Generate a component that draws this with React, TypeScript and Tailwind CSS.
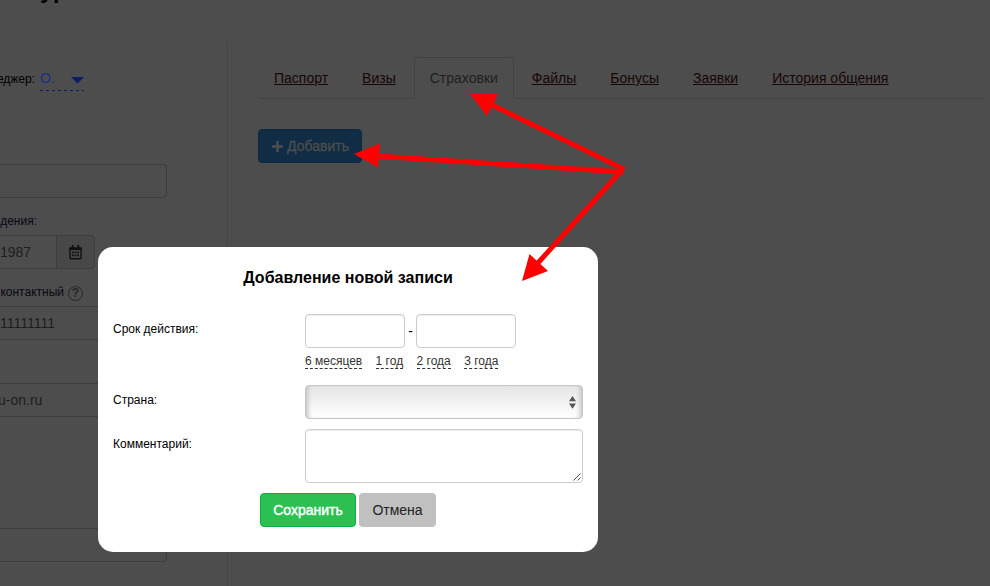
import { FaPlus } from 'react-icons/fa';

const TABS = ['Паспорт', 'Визы', 'Страховки', 'Файлы', 'Бонусы', 'Заявки', 'История общения'];
const PERIODS = ['6 месяцев', '1 год', '2 года', '3 года'];

// tip and tail of each pointer
const ARROWS = [
  { line: 'M624.5 169.5L490 104', head: '470,94 498,94 487,116' },
  { line: 'M623 172L376 156', head: '354,154 380,143.5 378,167.5' },
  { line: 'M622 170L537 264', head: '522,281 529.5,254 548,271' },
];

export default function App() {
  return (
    <div className="relative flex h-[586px] w-[990px] overflow-hidden bg-[#4d4d4d] font-['Liberation_Sans',Arial,sans-serif] text-black">
      <ClientForm />
      <ClientTabs />
      <div className="absolute left-[98px] top-[247px]">
        <AddDialog />
      </div>
      <Arrows />
    </div>
  );
}

function ClientForm() {
  return (
    <div className="flex w-[228px] shrink-0 flex-col">
      <div className="h-[41px] shrink-0">
        <h1 className="-mt-[24px] pl-[40px] text-2xl leading-[28px] font-bold">ур</h1>
      </div>
      <div className="flex grow flex-col border-r border-[#454545]">
        <div className="mt-[27px] flex h-[22px] items-start">
          <span className="flex w-[35px] justify-end text-[12px] leading-[22px] whitespace-nowrap">еджер:</span>
          <a className="ml-[5px] flex h-[22px] w-[44px] items-start justify-between text-[14px] leading-[20px] text-[#1a2f85]">
            <span>О.</span>
            <svg className="mt-[9px]" width="13" height="7" viewBox="0 0 13 7">
              <path d="M0 0H13L6.5 6.5Z" fill="#0d1b6b" />
            </svg>
          </a>
        </div>
        <svg className="ml-[40px] shrink-0" width="44" height="1">
          <path d="M0 .5H44" stroke="#0d1b6b" strokeDasharray="3 3" />
        </svg>
        <Field className="mt-[73px] w-[167px] rounded-r-[4px] border-r" />
        <Label className="mt-[15px] w-[37px]">ждения:</Label>
        <div className="mt-[6px] flex">
          <Field className="w-[56px]">1987</Field>
          <div className="flex h-[34px] w-[39px] items-center justify-center rounded-r-[4px] border border-[#3d3d3d] bg-[#484848]">
            <CalendarIcon />
          </div>
        </div>
        <div className="mt-[15px] flex h-[16px] items-center">
          <Label className="w-[64px]">контактный</Label>
          <HelpIcon />
        </div>
        <Field className="mt-[6px] w-[167px]">11111111</Field>
        <Field className="mt-[43px] w-[167px]">
          <span className="-ml-[2px]">u-on.ru</span>
        </Field>
        <Field className="mt-[111px] w-[167px] rounded-r-[4px] border-r" />
      </div>
    </div>
  );
}

function Label({ className, children }: { className: string; children: string }) {
  return (
    <span className={`flex h-[16px] shrink-0 items-center justify-end text-[12px] whitespace-nowrap text-[#080812] ${className}`}>
      {children}
    </span>
  );
}

function Field({ className, children }: { className: string; children?: React.ReactNode }) {
  return (
    <div className={`flex h-[34px] shrink-0 items-center border-y border-[#3d3d3d] text-[14px] text-[#1d1d1d] ${className}`}>
      {children}
    </div>
  );
}

function CalendarIcon() {
  return (
    <svg width="13" height="15" viewBox="0 0 13 15" fill="none">
      <path d="M1 4V12.7Q1 13.7 2 13.7H11Q12 13.7 12 12.7V4Z" stroke="#101010" strokeWidth="1.4" />
      <path d="M.4 2.2H12.6V5H.4ZM2.8 0H4.6V3H2.8ZM8.4 0H10.2V3H8.4Z" fill="#101010" />
      <path d="M3 7.3H10M3 10.3H10" stroke="#101010" strokeWidth="1.7" strokeDasharray="1.8 .8" />
    </svg>
  );
}

function HelpIcon() {
  return (
    <span className="mt-[2px] ml-[4px] flex size-[15px] items-center justify-center rounded-full border border-[#26262f] text-[12px] leading-none font-bold text-[#26262f]">
      ?
    </span>
  );
}

function ClientTabs() {
  return (
    <div className="flex flex-col pt-[57px] pl-[30px]">
      <div className="flex h-[42px] w-[726px] text-[14px]">
        {TABS.map((tab) =>
          tab === 'Страховки' ? (
            <span
              key={tab}
              className="mr-[2px] rounded-t-[4px] border border-b-0 border-[#424242] px-[15px] pt-[10px] leading-[20px] text-[#1f1f1f]"
            >
              {tab}
            </span>
          ) : (
            <a key={tab} className="border-b border-[#424242] pt-[11px] pr-[18px] pl-[16px] leading-[20px] text-[#170606] underline">
              {tab}
            </a>
          )
        )}
        <div className="grow border-b border-[#424242]" />
      </div>
      <button className="mt-[30px] flex h-[34px] w-[104px] items-center justify-center gap-[3px] rounded-[4px] border border-[#0e2840] bg-[#102d45] text-[14px] text-[#4d4d4d] [-webkit-text-stroke:0.3px]">
        <FaPlus size={13} />
        Добавить
      </button>
    </div>
  );
}

function AddDialog() {
  return (
    <div className="flex h-[305px] w-[500px] flex-col rounded-[15px] bg-white px-[15px] text-[12px]">
      <h2 className="mt-[21px] text-center text-[16px] leading-[20px] font-bold">Добавление новой записи</h2>
      <div className="mt-[26px] flex">
        <span className="w-[192px] pt-[7px] leading-[16px]">Срок действия:</span>
        <div>
          <div className="flex items-center">
            <input className="h-[34px] w-[100px] rounded-[4px] border border-[#ccc] shadow-[inset_0_1px_1px_rgba(0,0,0,0.075)]" />
            <span className="w-[11px] text-center text-[14px]">-</span>
            <input className="h-[34px] w-[100px] rounded-[4px] border border-[#ccc] shadow-[inset_0_1px_1px_rgba(0,0,0,0.075)]" />
          </div>
          <div className="mt-[5px] flex gap-[13.4px]">
            {PERIODS.map((period) => (
              <a key={period} className="h-[16px] border-b border-dashed border-[#333] leading-[16px] text-[#333]">
                {period}
              </a>
            ))}
          </div>
        </div>
      </div>
      <div className="mt-[16px] flex">
        <span className="w-[192px] pt-[7px] leading-[16px]">Страна:</span>
        <div className="flex h-[34px] w-[278px] items-center justify-end rounded-[4px] border border-[#c6c6c6] bg-linear-to-b from-[#e5e5e5] to-white pr-[6px] shadow-[inset_5px_0_4px_-3px_#c4c4c4,inset_-5px_0_4px_-3px_#c4c4c4]">
          <svg width="7" height="13" viewBox="0 0 7 13" fill="#555">
            <path d="M0 5.3L3.5 0L7 5.3ZM0 7.5H7L3.5 12.8Z" />
          </svg>
        </div>
      </div>
      <div className="mt-[10px] flex">
        <span className="w-[192px] pt-[7px] leading-[16px]">Комментарий:</span>
        <div className="flex h-[54px] w-[278px] items-end justify-end rounded-[4px] border border-[#ccc] p-px shadow-[inset_0_1px_1px_rgba(0,0,0,0.075)]">
          <svg width="8" height="8" viewBox="0 0 8 8" fill="none" stroke="#555">
            <path d="M.5 7.5L7.5 .5M4.5 7.5L7.5 4.5" />
          </svg>
        </div>
      </div>
      <div className="mt-[10px] flex gap-[3px] pl-[147px] text-[14px]">
        <button className="h-[34px] w-[96px] rounded-[4px] border border-[#10ae3d] bg-[#2cc053] text-white [-webkit-text-stroke:0.4px]">
          Сохранить
        </button>
        <button className="h-[34px] w-[77px] rounded-[4px] bg-[#c0c0c0] text-[#222]">Отмена</button>
      </div>
    </div>
  );
}

function Arrows() {
  return (
    <svg className="pointer-events-none absolute inset-0" width="990" height="586" fill="none">
      {ARROWS.map((arrow) => (
        <g key={arrow.head}>
          <path d={arrow.line} stroke="#f00" strokeWidth="5" />
          <polygon points={arrow.head} fill="#f00" />
        </g>
      ))}
    </svg>
  );
}
